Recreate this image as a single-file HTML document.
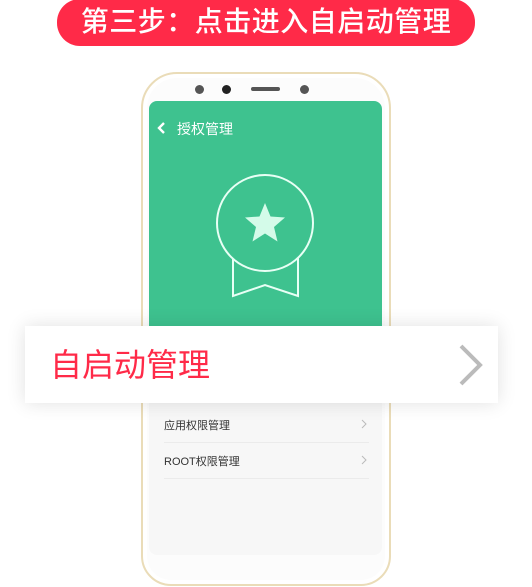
<!DOCTYPE html>
<html><head><meta charset="utf-8"><style>
*{margin:0;padding:0;box-sizing:border-box}
body{width:532px;height:587px;background:#fff;position:relative;overflow:hidden;font-family:"Liberation Sans","Noto Sans CJK SC",sans-serif}
.pill{position:absolute;left:57px;top:-1px;width:418px;height:47px;background:#ff2a48;border-radius:23px;color:#fff;font-size:28px;line-height:45px;text-align:center;letter-spacing:0.5px;font-weight:500}
.phone{position:absolute;left:141px;top:72px;width:250px;height:514px;border:2px solid #eadcb8;border-radius:36px 36px 30px 30px;background:#fcfcfc;box-shadow:inset 0 0 0 4px #fff}
.dot{position:absolute;width:9px;height:9px;border-radius:50%;background:#555;top:85px}
.spk{position:absolute;left:251px;top:87px;width:29px;height:4px;border-radius:2px;background:#555}
.screen{position:absolute;left:149px;top:101px;width:233px;height:454px;background:#f7f7f7;border-radius:8px;overflow:hidden}
.green{position:absolute;left:0;top:0;width:233px;height:230px;background:#3ec28f}
.title{position:absolute;left:28px;top:18px;color:#fff;font-size:14px}
.card{position:absolute;left:25px;top:326px;width:473px;height:77px;background:#fff;box-shadow:0 0 18px rgba(0,0,0,0.12)}
.card span{position:absolute;left:25px;top:19px;font-size:32px;color:#ff2a48;line-height:40px}
.item{position:absolute;left:15px;font-size:11px;color:#333}
.hr{position:absolute;left:15px;width:205px;height:1px;background:#ebebeb}
</style></head><body>
<div class="pill">第三步：点击进入自启动管理</div>
<div class="phone"></div>
<div class="dot" style="left:195px"></div>
<div class="dot" style="left:222px;background:#222"></div>
<div class="spk"></div>
<div class="dot" style="left:300px"></div>
<div class="screen">
 <div class="green">
  <svg style="position:absolute;left:8px;top:20px" width="10" height="14"><path d="M7 2L2 7L7 12" stroke="#fff" stroke-width="2.4" fill="none"/></svg>
  <div class="title">授权管理</div>
  <svg style="position:absolute;left:0;top:0" width="233" height="230">
   <path d="M84 155V195L116 184L149 195V155" stroke="#e8fff5" stroke-width="2" fill="none"/>
   <circle cx="116" cy="122" r="48" stroke="#e8fff5" stroke-width="2" fill="#3ec28f"/>
   <path d="M116 102L121.5 115.5L136 116.5L125 126L128.5 140.5L116 132.5L103.5 140.5L107 126L96 116.5L110.5 115.5Z" fill="#d4fbe9"/>
  </svg>
 </div>
 <div class="item" style="top:316px">应用权限管理</div>
 <svg style="position:absolute;left:211px;top:317px" width="8" height="12"><path d="M2 2L6 6L2 10" stroke="#bbb" fill="none"/></svg>
 <div class="hr" style="top:341px"></div>
 <div class="item" style="top:352px">ROOT权限管理</div>
 <svg style="position:absolute;left:211px;top:353px" width="8" height="12"><path d="M2 2L6 6L2 10" stroke="#bbb" fill="none"/></svg>
 <div class="hr" style="top:377px"></div>
</div>
<div class="card"><span>自启动管理</span>
 <svg style="position:absolute;left:432px;top:18px" width="30" height="42"><path d="M4 2L23 21L4 40" stroke="#bbb" stroke-width="4" fill="none"/></svg>
</div>
</body></html>
